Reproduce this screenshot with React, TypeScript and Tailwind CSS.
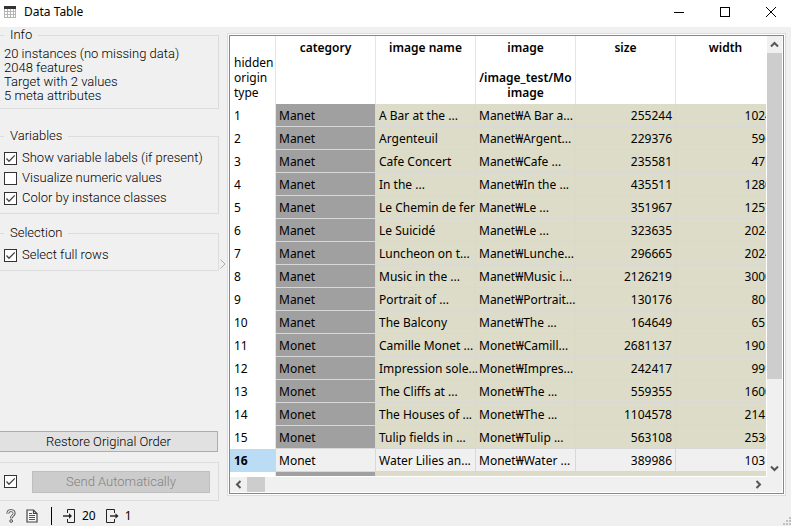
import type { ReactNode } from "react";

type Row = {
  id: number;
  category: string;
  name: string;
  image: string;
  size: string;
  width: string;
};

const rows: Row[] = [
  { id: 1, category: "Manet", name: "A Bar at the ...", image: "Manet₩A Bar a...", size: "255244", width: "1024" },
  { id: 2, category: "Manet", name: "Argenteuil", image: "Manet₩Argent...", size: "229376", width: "596" },
  { id: 3, category: "Manet", name: "Cafe Concert", image: "Manet₩Cafe ...", size: "235581", width: "471" },
  { id: 4, category: "Manet", name: "In the ...", image: "Manet₩In the ...", size: "435511", width: "1280" },
  { id: 5, category: "Manet", name: "Le Chemin de fer", image: "Manet₩Le ...", size: "351967", width: "1257" },
  { id: 6, category: "Manet", name: "Le Suicidé", image: "Manet₩Le ...", size: "323635", width: "2024" },
  { id: 7, category: "Manet", name: "Luncheon on t...", image: "Manet₩Lunche...", size: "296665", width: "2024" },
  { id: 8, category: "Manet", name: "Music in the ...", image: "Manet₩Music i...", size: "2126219", width: "3000" },
  { id: 9, category: "Manet", name: "Portrait of ...", image: "Manet₩Portrait...", size: "130176", width: "800" },
  { id: 10, category: "Manet", name: "The Balcony", image: "Manet₩The ...", size: "164649", width: "651" },
  { id: 11, category: "Monet", name: "Camille Monet ...", image: "Monet₩Camill...", size: "2681137", width: "1901" },
  { id: 12, category: "Monet", name: "Impression sole...", image: "Monet₩Impres...", size: "242417", width: "999" },
  { id: 13, category: "Monet", name: "The Cliffs at ...", image: "Monet₩The ...", size: "559355", width: "1600" },
  { id: 14, category: "Monet", name: "The Houses of ...", image: "Monet₩The ...", size: "1104578", width: "2141" },
  { id: 15, category: "Monet", name: "Tulip fields in ...", image: "Monet₩Tulip ...", size: "563108", width: "2536" },
  { id: 16, category: "Monet", name: "Water Lilies an...", image: "Monet₩Water ...", size: "389986", width: "1031" },
];

const CURRENT_ROW = 16;

function Chevron({ className }: { className: string }) {
  return (
    <svg viewBox="0 0 9 9" className={`size-[9px] ${className}`} fill="none" stroke="#555" strokeWidth="2">
      <path d="M1 6.5 4.5 3 8 6.5" />
    </svg>
  );
}

function CheckBox({ id, label, defaultChecked }: { id: string; label?: string; defaultChecked?: boolean }) {
  return (
    <span className="relative block size-[13px] shrink-0">
      <input
        id={id}
        type="checkbox"
        aria-label={label}
        defaultChecked={defaultChecked}
        className="peer block size-[13px] appearance-none border border-[#333] bg-white"
      />
      <svg
        viewBox="0 0 13 13"
        className="pointer-events-none absolute inset-0 hidden size-[13px] peer-checked:block"
        fill="none"
        stroke="#444"
        strokeWidth="1.3"
      >
        <path d="M2.5 6.5 5 9.2 10.8 3.4" />
      </svg>
    </span>
  );
}

function CheckRow({ id, text, defaultChecked }: { id: string; text: string; defaultChecked?: boolean }) {
  return (
    <div className="flex h-5 items-center gap-[5px] pl-1">
      <CheckBox id={id} defaultChecked={defaultChecked} />
      <label htmlFor={id}>{text}</label>
    </div>
  );
}

function Group({ title, className, children }: { title: string; className: string; children: ReactNode }) {
  return (
    <fieldset className={`border border-l-0 border-[#dcdcdc] ${className}`}>
      <legend className="ml-1 px-[6px]">{title}</legend>
      {children}
    </fieldset>
  );
}

function TitleBar() {
  return (
    <header className="flex h-[27px] shrink-0 items-start bg-white font-['Noto_Sans','Noto_Sans_CJK_KR',sans-serif] text-xs">
      <div className="flex h-[23px] flex-1 items-center gap-2 pl-1">
        <svg viewBox="0 0 12 12" className="size-3" shapeRendering="crispEdges">
          <rect width="12" height="12" fill="#b5b5b5" />
          <rect width="12" height="3" fill="#333" />
          <path d="M1 3h2v2H1zM4 3h2v2H4zM7 3h2v2H7zM10 3h1v2h-1zM1 6h2v2H1zM4 6h2v2H4zM7 6h2v2H7zM10 6h1v2h-1zM1 9h2v2H1zM4 9h2v2H4zM7 9h2v2H7zM10 9h1v2h-1z" fill="#fff" />
        </svg>
        <h1>Data Table</h1>
      </div>
      <div className="-mr-[3px] flex">
        <button aria-label="Minimize" className="flex h-[23px] w-[46px] items-center justify-center">
          <svg viewBox="0 0 10 10" className="size-[10px]" shapeRendering="crispEdges">
            <path d="M0 5h10v1H0z" />
          </svg>
        </button>
        <button aria-label="Maximize" className="flex h-[23px] w-[46px] items-center justify-center">
          <svg viewBox="0 0 10 10" className="size-[10px]" fill="none" stroke="#000">
            <rect x=".5" y=".5" width="9" height="9" />
          </svg>
        </button>
        <button aria-label="Close" className="flex h-[23px] w-[46px] items-center justify-center">
          <svg viewBox="0 0 10 10" className="size-[10px]" fill="none" stroke="#000">
            <path d="M0 0l10 10M10 0L0 10" />
          </svg>
        </button>
      </div>
    </header>
  );
}

function Sidebar() {
  return (
    <aside className="flex w-[219px] shrink-0 flex-col pt-px text-[13px] leading-[14px] font-light">
      <Group title="Info" className="py-[5px]">
        <div className="pl-1">
          <p>20 instances (no missing data)</p>
          <p>2048 features</p>
          <p>Target with 2 values</p>
          <p>5 meta attributes</p>
        </div>
      </Group>

      <Group title="Variables" className="mt-5 py-[5px]">
        <CheckRow id="labels" text="Show variable labels (if present)" defaultChecked />
        <CheckRow id="numeric" text="Visualize numeric values" />
        <CheckRow id="classes" text="Color by instance classes" defaultChecked />
      </Group>

      <Group title="Selection" className="mt-3 py-[5px]">
        <CheckRow id="full-rows" text="Select full rows" defaultChecked />
      </Group>

      <button className="mt-auto mr-px h-[21px] border border-l-0 border-[#adadad] bg-[#e1e1e1]">
        Restore Original Order
      </button>
      <div className="mt-[10px] flex h-[39px] items-center gap-[15px] border border-l-0 border-[#dcdcdc] pr-2 pl-1">
        <CheckBox id="auto-send" label="Send automatically" defaultChecked />
        <button disabled className="h-[22px] flex-1 border border-[#bfbfbf] bg-[#ccc] text-[#838383]">
          Send Automatically
        </button>
      </div>
    </aside>
  );
}

function DataGrid() {
  const head = "border-r border-[#e5e5e5] px-[3px] py-1 align-top font-semibold";

  return (
    <main className="mt-[6px] mr-[5px] mb-[5px] flex min-w-0 flex-1 border border-[#dcdcdc] bg-white p-px">
      <div className="grid min-w-0 flex-1 grid-cols-[minmax(0,1fr)_15px] grid-rows-[minmax(0,1fr)_15px] border border-[#828790] pr-px pb-px font-['Noto_Sans','Noto_Sans_CJK_KR',sans-serif] text-xs leading-[15px]">
        <div className="mr-px mb-px overflow-hidden">
          <table className="w-[546px] table-fixed border-separate border-spacing-0">
            <colgroup>
              <col className="w-[46px]" />
              <col className="w-[100px]" />
              <col className="w-[100px]" />
              <col className="w-[100px]" />
              <col className="w-[100px]" />
              <col className="w-[100px]" />
            </colgroup>
            <thead>
              <tr className="h-[68px]">
                <th className="border-r border-[#e5e5e5] py-1 pl-1 text-left align-bottom font-normal">
                  hidden
                  <br />
                  origin
                  <br />
                  type
                </th>
                <th className={head}>category</th>
                <th className={head}>image name</th>
                <th className={head}>
                  image
                  <br />
                  <br />
                  /image_test/Mo
                  <br />
                  image
                </th>
                <th className={head}>size</th>
                <th className={head}>width</th>
              </tr>
            </thead>
            <tbody>
              {rows.map((row) => {
                const current = row.id === CURRENT_ROW;
                const cell = `border-r border-b border-[#d8d8d8] px-[3px] whitespace-nowrap ${current ? "bg-[#f0f0f0]" : "bg-[#dcdcc8]"}`;
                return (
                  <tr key={row.id} className="h-[23px]">
                    <th
                      scope="row"
                      className={`pl-1 text-left ${current ? "bg-[#badcf4] font-bold" : "border-r border-[#e5e5e5] font-normal"}`}
                    >
                      {row.id}
                    </th>
                    <td
                      className={`border-r border-b border-[#d8d8d8] px-[3px] ${current ? "bg-[#f0f0f0]" : "bg-[#a0a0a0]"}`}
                    >
                      {row.category}
                    </td>
                    <td className={cell}>{row.name}</td>
                    <td className={cell}>{row.image}</td>
                    <td className={`${cell} text-right`}>{row.size}</td>
                    <td className={`${cell} text-right`}>{row.width}</td>
                  </tr>
                );
              })}
              <tr className="h-[23px]">
                <th className="border-r border-[#e5e5e5]" />
                <td className="border-r border-[#d8d8d8] bg-[#a0a0a0]" />
                <td className="border-r border-[#d8d8d8] bg-[#dcdcc8]" />
                <td className="border-r border-[#d8d8d8] bg-[#dcdcc8]" />
                <td className="border-r border-[#d8d8d8] bg-[#dcdcc8]" />
                <td className="border-r border-[#d8d8d8] bg-[#dcdcc8]" />
              </tr>
            </tbody>
          </table>
        </div>

        {/* Vertical scroll bar */}
        <div className="flex flex-col bg-[#f0f0f0]">
          <button aria-label="Scroll up" className="flex h-[17px] shrink-0 items-center justify-center">
            <Chevron className="" />
          </button>
          <div className="flex flex-1 flex-col">
            <div className="h-4/5 bg-[#cdcdcd]" />
          </div>
          <button aria-label="Scroll down" className="flex h-[17px] shrink-0 items-center justify-center">
            <Chevron className="rotate-180" />
          </button>
        </div>

        {/* Horizontal scroll bar */}
        <div className="flex bg-[#f0f0f0]">
          <button aria-label="Scroll left" className="flex w-[17px] items-center justify-center">
            <Chevron className="-rotate-90" />
          </button>
          <div className="flex-1">
            <div className="h-full w-[18px] bg-[#cdcdcd]" />
          </div>
          <button aria-label="Scroll right" className="flex w-[17px] items-center justify-center">
            <Chevron className="rotate-90" />
          </button>
        </div>
        <div className="bg-[#f0f0f0]" />
      </div>
    </main>
  );
}

function StatusBar() {
  return (
    <footer className="flex h-[25px] shrink-0 items-end justify-between font-['Noto_Sans','Noto_Sans_CJK_KR',sans-serif] text-xs">
      <div className="flex h-5 items-center pl-[6px]">
        <button aria-label="Help">
          <svg viewBox="0 0 10 14" className="h-[14px] w-[10px]" fill="none">
            <path d="M1.8 4.6C1.8 2.7 3 1.6 5 1.6s3.2 1 3.2 2.7C8.2 6.5 5.3 6.5 5.3 9.2" stroke="#444" strokeWidth="2.8" />
            <path d="M1.8 4.2C1.9 2.6 3.2 1.7 5 1.7s3.1 1 3.1 2.6C8.1 6.5 5.3 6.5 5.3 8.8" stroke="#eee" strokeWidth="1.2" />
            <circle cx="5.2" cy="12" r="1.4" fill="#ddd" stroke="#444" strokeWidth=".9" />
          </svg>
        </button>
        <button aria-label="Report" className="ml-[10px]">
          <svg viewBox="0 0 12 14" className="h-[14px] w-3" fill="none" stroke="#444" strokeWidth="1.2">
            <path d="M1 1h6.5L11 4.5V13H1z" fill="#f8f8f8" />
            <path d="M7.5 1v3.5H11" />
            <path d="M3 4.5h3M3 6.5h6M3 8.5h6M3 10.5h6" stroke="#555" strokeWidth="1" />
          </svg>
        </button>
        <span className="ml-[13px] h-[18px] w-px bg-black" />
        <button className="ml-[11px] flex items-center gap-[6px]">
          <svg viewBox="0 0 13 14" className="h-[14px] w-[13px]" fill="none" stroke="#222">
            <path d="M4.500 4V.5h7v13h-7V10" />
            <path d="M0 7h8" strokeWidth="1.4" />
            <path d="M6 4.200 9 7 6 9.800z" fill="#222" stroke="none" />
          </svg>
          20
        </button>
        <button className="ml-[10px] flex items-center gap-[6px]">
          <svg viewBox="0 0 13 14" className="h-[14px] w-[13px]" fill="none" stroke="#222">
            <path d="M8.500 4V.5h-8v13h8V10" />
            <path d="M4 7h7" strokeWidth="1.4" />
            <path d="M9.500 4.200 12.500 7 9.500 9.800z" fill="#222" stroke="none" />
          </svg>
          1
        </button>
      </div>
      <svg viewBox="0 0 8 8" className="mb-px size-2" fill="#bfbfbf">
        <path d="M6 0h2v2H6zM3 3h2v2H3zM6 3h2v2H6zM0 6h2v2H0zM3 6h2v2H3zM6 6h2v2H6z" />
      </svg>
    </footer>
  );
}

export default function App() {
  return (
    <div className="flex h-screen flex-col overflow-hidden bg-[#f0f0f0] font-[Roboto,sans-serif] text-black">
      <TitleBar />
      <div className="flex min-h-0 flex-1">
        <Sidebar />
        <button aria-label="Collapse controls" className="flex w-2 shrink-0 items-center justify-center">
          <svg viewBox="0 0 6 10" className="h-[10px] w-[6px]" fill="none" stroke="#aaa">
            <path d="M.5.5 5 5 .5 9.5" />
          </svg>
        </button>
        <DataGrid />
      </div>
      <StatusBar />
    </div>
  );
}
